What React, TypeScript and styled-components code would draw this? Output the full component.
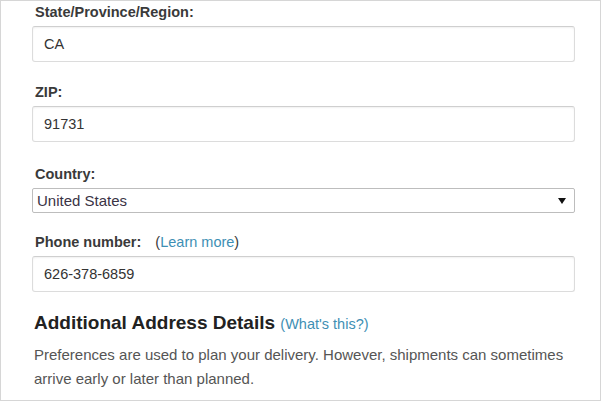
import styled, { createGlobalStyle } from 'styled-components';

const GlobalStyle = createGlobalStyle`
  html, body {
    margin: 0;
    padding: 0;
    background: #fff;
  }
  body {
    font-family: "Liberation Sans", Arial, sans-serif;
  }
`;

const Frame = styled.div`
  box-sizing: border-box;
  width: 601px;
  height: 401px;
  border: 1px solid #d6d6d6;
  overflow: hidden;
  padding: 2px 25px 0 31px;
  display: flex;
  flex-direction: column;
`;

const Field = styled.div<{ $gap: number }>`
  display: flex;
  flex-direction: column;
  margin-bottom: ${(p) => p.$gap}px;
`;

const Label = styled.label`
  font-size: 14.5px;
  font-weight: bold;
  color: #3a3a3a;
  padding-left: 3px;
  line-height: 18px;
  margin-bottom: 5px;
`;

const Link = styled.a`
  color: #3e8fb4;
  font-weight: normal;
  text-decoration: none;
`;

const Aside = styled.span`
  font-weight: normal;
  margin-left: 14px;
`;

const TextBox = styled.div`
  box-sizing: border-box;
  height: 36px;
  border: 1px solid #dcdcdc;
  border-top-color: #cfcfcf;
  border-radius: 3px;
  box-shadow: inset 0 1px 2px rgba(0, 0, 0, 0.06);
  padding: 0 10px 0 11px;
  display: flex;
  align-items: center;
  font-size: 14.5px;
  color: #333;
`;

const SelectBox = styled.div`
  box-sizing: border-box;
  height: 25px;
  border: 1px solid #bdbdbd;
  border-radius: 2px;
  padding: 0 6px 0 4px;
  display: flex;
  align-items: center;
  justify-content: space-between;
  font-size: 15px;
  color: #3a3345;
`;

const Arrow = styled.span`
  width: 0;
  height: 0;
  border-left: 4px solid transparent;
  border-right: 4px solid transparent;
  border-top: 6px solid #111;
  margin-right: 2px;
`;

const Heading = styled.h3`
  margin: 0 0 8px;
  padding-left: 2px;
  font-size: 19px;
  font-weight: bold;
  color: #222;
  line-height: 22px;
`;

const SmallLink = styled(Link)`
  font-size: 14.5px;
`;

const Para = styled.p`
  margin: 0;
  padding-left: 2px;
  font-size: 15px;
  line-height: 24px;
  color: #555;
`;

export default function App() {
  return (
    <>
      <GlobalStyle />
      <Frame>
        <Field $gap={21}>
          <Label>State/Province/Region:</Label>
          <TextBox>CA</TextBox>
        </Field>
        <Field $gap={23}>
          <Label>ZIP:</Label>
          <TextBox>91731</TextBox>
        </Field>
        <Field $gap={20}>
          <Label>Country:</Label>
          <SelectBox>
            United States
            <Arrow />
          </SelectBox>
        </Field>
        <Field $gap={20}>
          <Label>
            Phone number:
            <Aside>
              (<Link href="#">Learn more</Link>)
            </Aside>
          </Label>
          <TextBox>626-378-6859</TextBox>
        </Field>
        <Heading>
          Additional Address Details <SmallLink href="#">(What's this?)</SmallLink>
        </Heading>
        <Para>
          Preferences are used to plan your delivery. However, shipments can sometimes arrive
          early or later than planned.
        </Para>
      </Frame>
    </>
  );
}
